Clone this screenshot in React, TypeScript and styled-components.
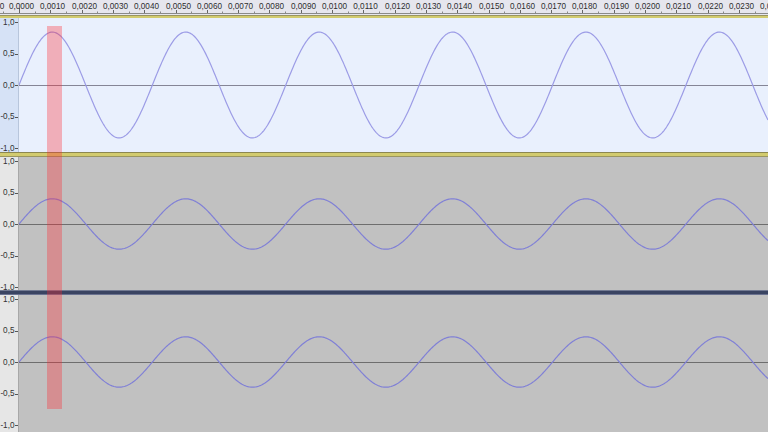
import styled, { createGlobalStyle } from "styled-components";

const GlobalStyle = createGlobalStyle`
    html, body {
        margin: 0;
        padding: 0;
        background: #c0c0c0;
        overflow: hidden;
    }
    body {
        font-family: "Liberation Sans", Arial, sans-serif;
    }
`

const ORIGIN = 19;
const PX_PER_MS = 31.3;
const PERIOD = 133.4;
const UNIT = 63;
const SCALE_H = 134;

const Page = styled.div`
    position: relative;
    width: 768px;
    height: 432px;
    overflow: hidden;
    display: flex;
    flex-direction: column;
`

const RulerBar = styled.div`
    height: 15px;
    flex-shrink: 0;
    background: #e6e6ee;
`

const Separator = styled.div<{ $kind: "yellow" | "dark" }>`
    flex-shrink: 0;
    box-sizing: border-box;
    height: 5px;
    background: ${(p) => (p.$kind === "dark" ? "#3a4462" : "#d2cb6e")};
    border-top: 1px solid ${(p) => (p.$kind === "dark" ? "#727a92" : "#8c8750")};
    border-bottom: 1px solid ${(p) => (p.$kind === "dark" ? "#6a7290" : "#9a9560")};
`

const TopEdge = styled.div`
    height: 3px;
    flex-shrink: 0;
    box-sizing: border-box;
    background: #d2cb6e;
    border-top: 1px solid #9a9560;
`

const TrackRow = styled.div<{ $h: number; $selected?: boolean }>`
    display: flex;
    flex-direction: row;
    flex-shrink: 0;
    height: ${(p) => p.$h}px;
    background: ${(p) => (p.$selected ? "#e9f0fd" : "#c1c1c1")};
`

const VRuler = styled.div<{ $selected?: boolean }>`
    width: 18px;
    flex-shrink: 0;
    border-right: 1px solid ${(p) => (p.$selected ? "#b8c6dc" : "#a8a8a8")};
    background: ${(p) => (p.$selected ? "#d6e2f6" : "#e6e6e6")};
`

const WaveArea = styled.div`
    flex: 1;
    overflow: hidden;
`

const Selection = styled.div`
    position: absolute;
    left: 47px;
    top: 26px;
    width: 15px;
    height: 383px;
    background: rgba(255, 40, 50, 0.33);
    pointer-events: none;
`

const fmt = (n: number, digits: number) => n.toFixed(digits).replace(".", ",");

const TimeRuler = () => {
    const majors: number[] = [];
    for (let i = -1; i <= 25; i++) majors.push(i);
    return (
        <RulerBar>
            <svg width={768} height={15} style={{ display: "block" }}>
                <line x1={0} y1={13.5} x2={768} y2={13.5} stroke="#8a8a8a" />
                {majors.map((i) => {
                    const x = Math.round(ORIGIN + i * PX_PER_MS) + 0.5;
                    const mx = Math.round(ORIGIN + (i + 0.5) * PX_PER_MS) + 0.5;
                    return (
                        <g key={i}>
                            <line x1={x} y1={i === 0 ? 8 : 10} x2={x} y2={13} stroke="#666" />
                            <line x1={mx} y1={11.5} x2={mx} y2={13} stroke="#888" />
                            <text
                                x={x + 2}
                                y={9}
                                fontSize={8.2}
                                fill="#2e2e2e"
                                textAnchor="middle"
                                fontFamily='"Liberation Sans", Arial, sans-serif'
                            >
                                {(i < 0 ? "-" : "") + fmt(Math.abs(i) / 1000, 4)}
                            </text>
                        </g>
                    );
                })}
            </svg>
        </RulerBar>
    );
};

const AmpRuler = (props: { height: number; selected?: boolean }) => {
    const c = SCALE_H / 2;
    const values = [1, 0.5, 0, -0.5, -1];
    return (
        <VRuler $selected={props.selected}>
            <svg width={18} height={props.height} style={{ display: "block" }}>
                {values.map((v) => {
                    const y = c - v * UNIT;
                    return (
                        <g key={v}>
                            <text
                                x={14.5}
                                y={y + 2.8}
                                fontSize={8.2}
                                fill="#333"
                                textAnchor="end"
                                fontFamily='"Liberation Sans", Arial, sans-serif'
                            >
                                {fmt(v, 1)}
                            </text>
                            <line x1={15} y1={Math.round(y) + 0.5} x2={18} y2={Math.round(y) + 0.5} stroke="#555" />
                        </g>
                    );
                })}
            </svg>
        </VRuler>
    );
};

const wavePath = (amp: number, width: number) => {
    const c = SCALE_H / 2;
    let d = "";
    for (let x = 0; x <= width; x += 1) {
        const y = c - amp * UNIT * Math.sin((2 * Math.PI * x) / PERIOD);
        d += `${x === 0 ? "M" : "L"}${x} ${y.toFixed(2)} `;
    }
    return d;
};

const Track = (props: { height: number; amp: number; selected?: boolean }) => {
    const w = 768 - ORIGIN;
    const c = SCALE_H / 2;
    return (
        <TrackRow $h={props.height} $selected={props.selected}>
            <AmpRuler height={props.height} selected={props.selected} />
            <WaveArea>
                <svg width={w} height={props.height} style={{ display: "block" }}>
                    <line
                        x1={0}
                        y1={c + 0.5}
                        x2={w}
                        y2={c + 0.5}
                        stroke={props.selected ? "#858596" : "#6e6e6e"}
                    />
                    <path
                        d={wavePath(props.amp, w)}
                        fill="none"
                        stroke={props.selected ? "#9c9ce6" : "#8080d6"}
                        strokeWidth={1.2}
                    />
                </svg>
            </WaveArea>
        </TrackRow>
    );
};

export default function App() {
    return (
        <>
            <GlobalStyle />
            <Page>
                <TimeRuler />
                <TopEdge />
                <Track height={134} amp={0.84} selected />
                <Separator $kind="yellow" />
                <Track height={133} amp={0.4} />
                <Separator $kind="dark" />
                <Track height={140} amp={0.4} />
                <Selection />
            </Page>
        </>
    );
}
